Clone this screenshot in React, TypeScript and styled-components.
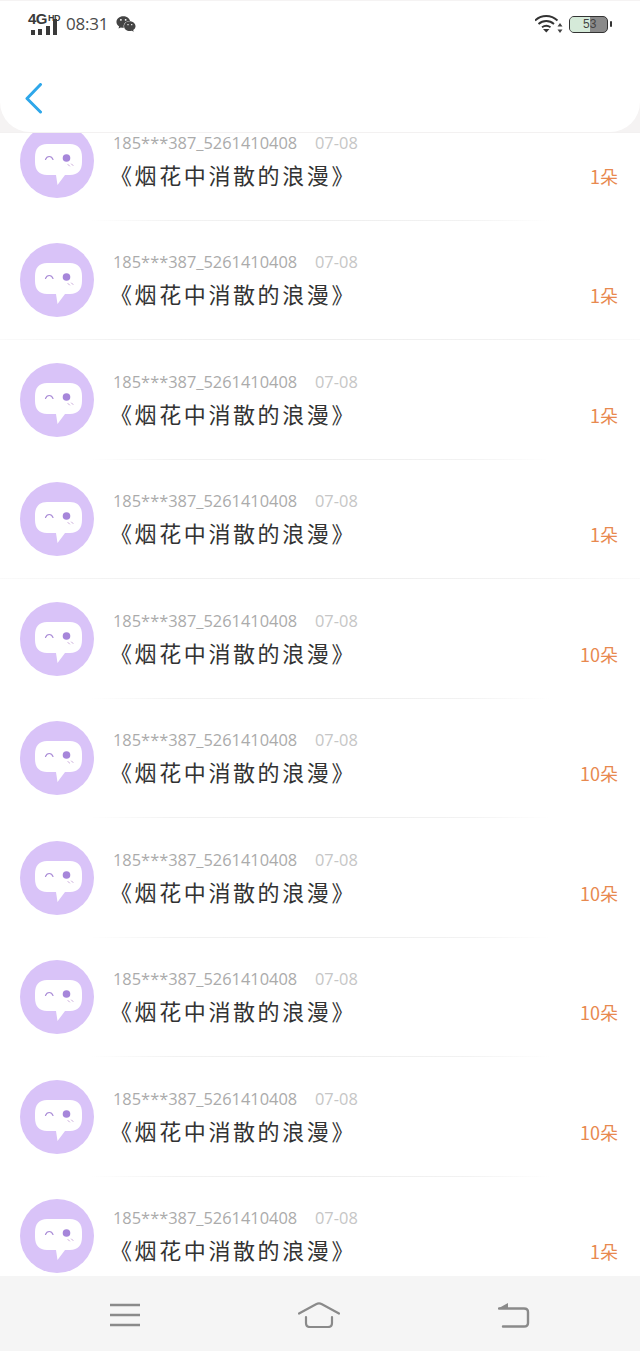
import styled, { createGlobalStyle } from "styled-components";
import { FaWeixin } from "react-icons/fa";

const records = [
  { count: 1, wide: false },
  { count: 1, wide: true },
  { count: 1, wide: false },
  { count: 1, wide: true },
  { count: 10, wide: false },
  { count: 10, wide: false },
  { count: 10, wide: false },
  { count: 10, wide: false },
  { count: 10, wide: false },
  { count: 1, wide: false },
];

export default function App() {
  return (
    <Screen>
      <GlobalStyle />
      <HeaderShell>
        <Header>
          <StatusBar>
            <StatusLeft>
              <Signal>
                <NetworkLabel>
                  4G<small>HD</small>
                </NetworkLabel>
                <SignalBars width="30" height="16" viewBox="0 0 30 16" fill="#3a3a3a">
                  <rect x="3" y="11" width="4" height="5" />
                  <rect x="10" y="10" width="4" height="6" />
                  <rect x="18" y="7" width="4" height="9" />
                  <rect x="25" y="0" width="4" height="16" />
                </SignalBars>
              </Signal>
              <Time>08:31</Time>
              <FaWeixin size={20} color="#444" />
            </StatusLeft>
            <StatusRight>
              <svg width="28" height="20" viewBox="0 0 28 20" fill="none">
                <path d="M0 6.500C6.500 0.500 16 0.500 22.500 6.500" stroke="#333" strokeWidth="1.800" />
                <path d="M3.500 10C8 6 14.500 6 19 10" stroke="#333" strokeWidth="1.800" />
                <path d="M7 13.300C9.500 11.500 13 11.500 15.500 13.300" stroke="#333" strokeWidth="1.800" />
                <path d="M8 15H14.500L11.300 18.500Z" fill="#333" />
                <path d="M25 9L27.500 12.500H22.500ZM25 19L22.500 15.500H27.500Z" fill="#444" />
              </svg>
              <Battery>
                <BatteryLevel style={{ width: "53%" }} />
                <BatteryText>53</BatteryText>
              </Battery>
            </StatusRight>
          </StatusBar>
          <NavRow>
            <svg width="20" height="32" viewBox="0 0 20 32" fill="none">
              <path d="M16.500 1.500L3 15.500L16.500 29" stroke="#2ea7ea" strokeWidth="3" strokeLinecap="round" strokeLinejoin="round" />
            </svg>
          </NavRow>
        </Header>
      </HeaderShell>

      <List>
        <ListInner>
          {records.map((record, index) => (
            <Row key={index} $wide={record.wide} $last={index === records.length - 1}>
              <Avatar>
                <svg width="58" height="54" viewBox="0 0 58 54">
                  <path
                    d="M19 7H42C50 7 54 12 54 20V25C54 33 50 38 42 38H37L29.500 48L28 38H19C11 38 7 33 7 25V20C7 12 11 7 19 7Z"
                    fill="#fff"
                  />
                  <path d="M17.500 22.500C19 18.500 23.500 18.500 25 22.500" fill="none" stroke="#a98bd6" strokeWidth="1.200" strokeLinecap="round" />
                  <circle cx="38.500" cy="21" r="3.800" fill="#a686da" />
                  <path d="M40 27.500L41.500 29M43.500 27L45 28.500" stroke="#c9a9d9" strokeWidth="1" strokeLinecap="round" />
                </svg>
              </Avatar>
              <Content>
                <Meta>
                  <User>185***387_5261410408</User>
                  <DateText>07-08</DateText>
                </Meta>
                <Title>《烟花中消散的浪漫》</Title>
              </Content>
              <Count>{record.count}朵</Count>
            </Row>
          ))}
        </ListInner>
      </List>

      <BottomNav>
        <svg width="30" height="24" viewBox="0 0 30 24" fill="none" stroke="#8a8a8a" strokeWidth="2.400">
          <path d="M0 2H30M0 12H30M0 22H30" />
        </svg>
        <svg width="42" height="26" viewBox="0 0 42 26" fill="none" stroke="#8a8a8a" strokeWidth="2.200" strokeLinecap="round">
          <path d="M1 11.500L18 2.200C20 1.200 22 1.200 24 2.200L41 11.500" />
          <path d="M8 15V21C8 23.500 9.500 25 12 25H30C32.500 25 34 23.500 34 21V15" />
        </svg>
        <svg width="32" height="26" viewBox="0 0 32 26" fill="none" stroke="#8a8a8a" strokeWidth="2.400">
          <path d="M1 6.500H26C28.500 6.500 30 8 30 10V21C30 23.500 28.500 24.500 26 24.500H5" strokeLinecap="round" />
          <path d="M1 6L10 1V6Z" fill="#8a8a8a" stroke="none" />
        </svg>
      </BottomNav>
    </Screen>
  );
}

const GlobalStyle = createGlobalStyle`
  html, body {
    margin: 0;
    padding: 0;
    background: #ffffff;
  }
`;

const Screen = styled.main`
  width: 640px;
  height: 1351px;
  display: flex;
  flex-direction: column;
  overflow: hidden;
  font-family: "Noto Sans CJK SC", "Noto Sans", sans-serif;
`;

const HeaderShell = styled.div`
  flex: 0 0 133px;
  background: #f5f3f3;
  padding-top: 1px;
  box-sizing: border-box;
  border-bottom: 1px solid #f3f1f1;
`;

const Header = styled.header`
  height: 131px;
  background: #ffffff;
  border-radius: 0 0 30px 30px;
`;

const StatusBar = styled.div`
  height: 46px;
  padding: 11px 32px 0 28px;
  box-sizing: border-box;
  display: flex;
  justify-content: space-between;
  align-items: flex-start;
`;

const StatusLeft = styled.div`
  display: flex;
  align-items: center;
  gap: 8px;
  height: 24px;
`;

const StatusRight = styled.div`
  display: flex;
  align-items: center;
  gap: 6px;
  height: 24px;
`;

const Signal = styled.div`
  width: 30px;
  display: flex;
  flex-direction: column;
`;

const SignalBars = styled.svg`
  margin-top: -5px;
`;

const NetworkLabel = styled.div`
  font-family: "Liberation Sans", sans-serif;
  font-size: 15px;
  line-height: 10px;
  font-weight: 700;
  color: #3a3a3a;
  letter-spacing: -0.5px;
  white-space: nowrap;

  small {
    font-size: 9px;
    vertical-align: 3px;
    margin-left: 1px;
  }
`;

const Time = styled.span`
  font-family: "Open Sans", sans-serif;
  font-size: 17px;
  font-weight: 400;
  color: #4a4a4a;
  line-height: 24px;
  letter-spacing: -0.2px;
`;

const Battery = styled.div`
  position: relative;
  width: 39px;
  height: 17px;
  box-sizing: border-box;
  border: 1.5px solid #333333;
  border-radius: 5px;
  background: #8a8a8a;

  &::after {
    content: "";
    position: absolute;
    right: -5px;
    top: 4px;
    width: 2px;
    height: 6px;
    background: #333333;
    border-radius: 1px;
  }
`;

const BatteryLevel = styled.div`
  position: absolute;
  left: 0;
  top: 0;
  bottom: 0;
  background: #d5ead9;
  border-radius: 4px 0 0 4px;
`;

const BatteryText = styled.span`
  position: absolute;
  left: 13px;
  top: -1px;
  font-family: "Liberation Sans", sans-serif;
  font-size: 12px;
  line-height: 16px;
  color: #444444;
`;

const NavRow = styled.div`
  padding: 36px 0 0 24px;
  line-height: 0;
`;

const List = styled.section`
  flex: 1;
  min-height: 0;
  overflow: hidden;
  background: #ffffff;
`;

const ListInner = styled.div`
  margin-top: -32px;
`;

const Row = styled.div<{ $wide: boolean; $last: boolean }>`
  position: relative;
  height: 119.5px;
  padding: 0 22px 0 20px;
  box-sizing: border-box;
  display: flex;
  align-items: center;

  &::after {
    content: "";
    display: ${(props) => (props.$last ? "none" : "block")};
    position: absolute;
    bottom: 0;
    left: ${(props) => (props.$wide ? "0" : "90px")};
    right: ${(props) => (props.$wide ? "0" : "90px")};
    height: 1px;
    background: linear-gradient(
      to right,
      ${(props) => (props.$wide ? "#fafafa" : "#ffffff")},
      #f2f2f2 18%,
      #eeeeee 50%,
      #f2f2f2 82%,
      ${(props) => (props.$wide ? "#fafafa" : "#ffffff")}
    );
  }
`;

const Avatar = styled.div`
  flex: 0 0 74px;
  height: 74px;
  border-radius: 50%;
  background: #d9c3f8;
  display: flex;
  align-items: center;
  justify-content: center;
  padding-top: 6px;
  box-sizing: border-box;
`;

const Content = styled.div`
  flex: 1;
  margin-left: 19px;
  padding-bottom: 2px;
  display: flex;
  flex-direction: column;
  gap: 4px;
`;

const Meta = styled.div`
  display: flex;
  gap: 17px;
  font-family: "Open Sans", sans-serif;
  font-size: 16.4px;
  font-weight: 400;
  line-height: 24px;
`;

const User = styled.span`
  color: #ababab;
  width: 185px;
  white-space: nowrap;
`;

const DateText = styled.span`
  color: #c6c6c6;
`;

const Title = styled.div`
  font-size: 22px;
  font-weight: 400;
  line-height: 30px;
  letter-spacing: 2.6px;
  color: #333333;
  white-space: nowrap;
  margin-left: -3px;
`;

const Count = styled.div`
  font-size: 18px;
  font-weight: 400;
  color: #e8894f;
  margin-top: 30px;
`;

const BottomNav = styled.nav`
  flex: 0 0 75px;
  background: #f5f5f5;
  display: flex;
  align-items: center;
  justify-content: space-between;
  padding: 2px 110px 0;
  box-sizing: border-box;
`;
